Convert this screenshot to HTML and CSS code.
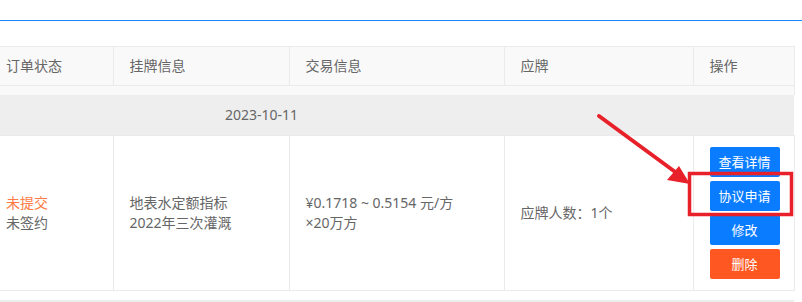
FILE: index.html
```html
<!DOCTYPE html>
<html lang="zh">
<head>
<meta charset="utf-8">
<link rel="stylesheet" href="styles.css">
</head>
<body>
<div class="page">
  <div class="topbar"></div>
  <div class="content">
    <table class="orders">
      <colgroup>
        <col class="c1"><col class="c2"><col class="c3"><col class="c4"><col class="c5">
      </colgroup>
      <thead>
        <tr class="head-row">
          <th class="first">订单状态</th>
          <th>挂牌信息</th>
          <th>交易信息</th>
          <th>应牌</th>
          <th>操作</th>
        </tr>
      </thead>
      <tbody>
        <tr class="spacer"><td colspan="5"></td></tr>
        <tr class="date-row"><td colspan="5">2023-10-11</td></tr>
        <tr class="data-row">
          <td class="first">
            <div class="status-warn">未提交</div>
            <div>未签约</div>
          </td>
          <td>
            <div>地表水定额指标</div>
            <div>2022年三次灌溉</div>
          </td>
          <td>
            <div>¥0.1718 ~ 0.5154 元/方</div>
            <div>×20万方</div>
          </td>
          <td>应牌人数：1个</td>
          <td class="ops">
            <span class="btn">查看详情</span>
            <span class="btn">协议申请</span>
            <span class="btn">修改</span>
            <span class="btn btn-danger">删除</span>
          </td>
        </tr>
        <tr class="gap"><td colspan="5"></td></tr>
        <tr class="date-row next"><td colspan="5"></td></tr>
      </tbody>
    </table>
  </div>
  <svg class="annot" width="802" height="302" viewBox="0 0 802 302">
    <line x1="599" y1="116" x2="678" y2="174" stroke="#e8202a" stroke-width="4" stroke-linecap="round"/>
    <polygon points="690,184 667,180 679,166" fill="#e8202a"/>
    <rect x="689.5" y="173.5" width="102" height="41" fill="none" stroke="#e8202a" stroke-width="3.5"/>
  </svg>
</div>
</body>
</html>
```
FILE: styles.css
```css
html, body {
  margin: 0;
  padding: 0;
  background: #fff;
}
body {
  font-family: "Noto Sans", "Noto Sans CJK SC", sans-serif;
  font-size: 14px;
  color: #666;
}
.page {
  position: relative;
  width: 802px;
  height: 302px;
  overflow: hidden;
}
.topbar {
  height: 20px;
  border-bottom: 1px solid #1a85ff;
}
.content {
  padding-top: 25px;
}
.orders {
  border-collapse: collapse;
  table-layout: fixed;
  width: 794px;
}
.c1 { width: 113px; }
.c2 { width: 176px; }
.c3 { width: 215px; }
.c4 { width: 189px; }
.c5 { width: 101px; }
.orders th,
.orders td {
  border: 1px solid #ebebeb;
  padding: 0 0 0 16px;
  text-align: left;
  font-weight: normal;
  line-height: 20px;
  vertical-align: middle;
}
.orders .first {
  padding-left: 6px;
  border-left: none;
}
.head-row th {
  height: 38px;
  background: #f9f9f9;
}
.spacer td {
  height: 9px;
  padding: 0;
  background: #f9f9f9;
  border-top: none;
  border-bottom: none;
  border-left: none;
}
.date-row td {
  height: 40px;
  padding: 0 0 0 225px;
  background: #eeeeee;
  border: none;
}
.data-row td {
  height: 154px;
}
.status-warn {
  color: #ff7b45;
}
.ops {
  padding-left: 15px;
}
.btn {
  display: block;
  width: 70px;
  height: 30px;
  line-height: 30px;
  margin: 0 0 4px;
  text-align: center;
  font-size: 13px;
  color: #fff;
  background: #0a7cff;
  border-radius: 2px;
}
.btn:last-child {
  margin-bottom: 0;
}
.btn-danger {
  background: #ff5722;
}
.gap td {
  height: 9px;
  padding: 0;
  border: none;
  background: #fff;
}
.next td {
  background: #eeeeee;
}
.annot {
  position: absolute;
  left: 0;
  top: 0;
  pointer-events: none;
}
```
